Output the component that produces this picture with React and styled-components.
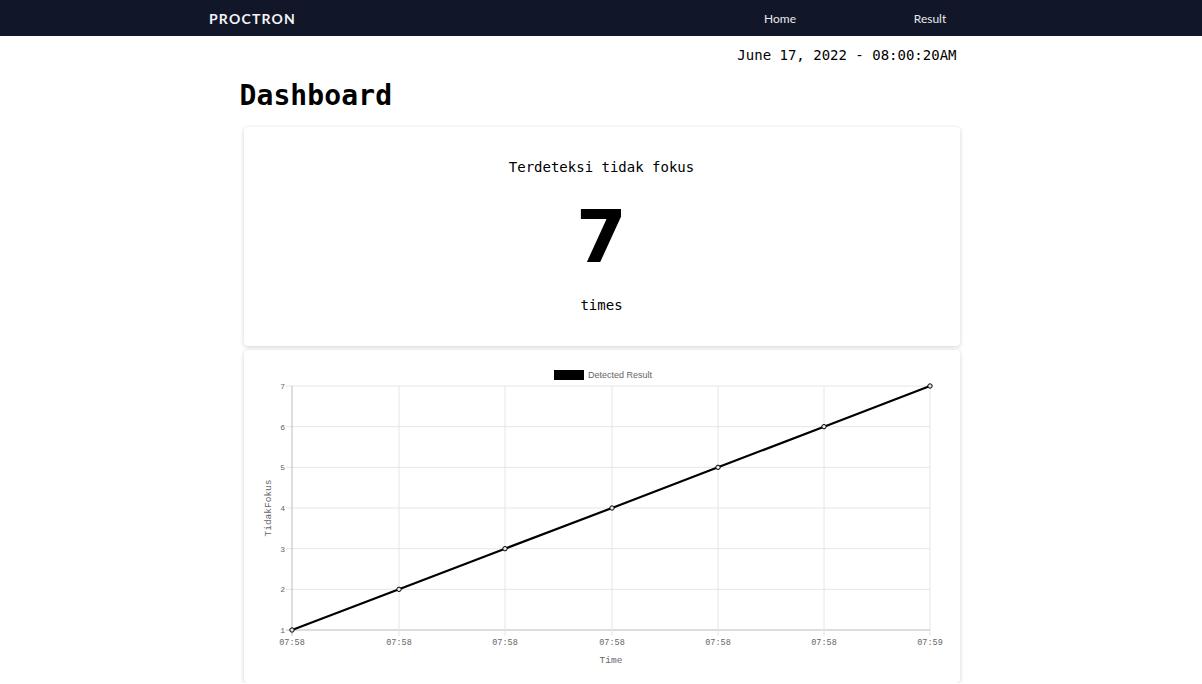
import React from "react";
import styled, { createGlobalStyle } from "styled-components";

const Global = createGlobalStyle`
  html, body { margin: 0; padding: 0; background: #fff; }
  body { font-family: "DejaVu Sans Mono", "Liberation Mono", monospace; color: #000; }
`;

const NavBar = styled.nav`
  height: 36px;
  background: #121629;
  display: flex;
  align-items: center;
  padding: 0 197px 0 209px;
`;
const Brand = styled.div`
  font-family: Lato, "Liberation Sans", sans-serif;
  font-weight: 700;
  font-size: 14px;
  letter-spacing: 1.2px;
  color: #f4f4f6;
  flex: 1;
`;
const NavLink = styled.a`
  font-family: Lato, "Liberation Sans", sans-serif;
  font-size: 12px;
  color: #e8e8ec;
  width: 150px;
  text-align: center;
  text-decoration: none;
`;

const Container = styled.main`
  width: 722px;
  margin: 0 auto;
  padding-left: 5px;
  display: flex;
  flex-direction: column;
`;
const DateLine = styled.div`
  text-align: right;
  font-size: 14px;
  padding-top: 10px;
  height: 27px;
  line-height: 18px;
  padding-right: 8px;
`;
const Title = styled.h1`
  margin: 5px 0 0 -3px;
  font-size: 28px;
  font-weight: 700;
  line-height: 36px;
  height: 35px;
  letter-spacing: 0.1px;
`;
const Card = styled.section`
  margin-left: 1px;
  width: 716px;
  background: #fff;
  border-radius: 4px;
  box-shadow: 0 1px 4px rgba(0,0,0,0.18);
  margin-top: 4px;
  display: flex;
  flex-direction: column;
  align-items: center;
  height: ${p => p.$h}px;
`;
const CardLabel = styled.div`
  font-size: 14px;
  line-height: 18px;
  margin-top: ${p => p.$mt}px;
`;
const BigNumber = styled.div`
  font-family: "DejaVu Sans", "Liberation Sans", sans-serif;
  font-weight: 700;
  font-size: 73px;
  line-height: 73px;
  margin-top: 24px;
`;

const xs = [48, 155, 261, 368, 474, 580, 686];
const yFor = v => 280 - (v - 1) * (244 / 6);

function Chart() {
  return (
    <svg width="716" height="333" viewBox="0 0 716 333">
      <rect x="310" y="20" width="30" height="10" fill="#000" />
      <text x="344" y="28" fontFamily="Liberation Sans, Arial, sans-serif" fontSize="9" fill="#666">Detected Result</text>
      {[1,2,3,4,5,6,7].map(v => (
        <g key={v}>
          <line x1="42" x2="686" y1={yFor(v)} y2={yFor(v)} stroke={v === 1 ? "#bbb" : "#e6e6e6"} strokeWidth="1" />
          <text x="41" y={yFor(v) + 3} textAnchor="end" fontFamily="Liberation Mono, Courier New, monospace" fontSize="8" fill="#666">{v}</text>
        </g>
      ))}
      {xs.map((x, i) => (
        <g key={x}>
          <line x1={x} x2={x} y1="36" y2="286" stroke={i === 0 ? "#bbb" : "#e6e6e6"} strokeWidth="1" />
          <text x={x} y="295" textAnchor="middle" fontFamily="Liberation Mono, Courier New, monospace" fontSize="8.5" fill="#666">{i === 6 ? "07:59" : "07:58"}</text>
        </g>
      ))}
      <text x="367" y="313" textAnchor="middle" fontFamily="Liberation Mono, Courier New, monospace" fontSize="9.5" fill="#666">Time</text>
      <text transform="translate(27 158) rotate(-90)" textAnchor="middle" fontFamily="Liberation Mono, Courier New, monospace" fontSize="9.5" fill="#666">TidakFokus</text>
      <polyline points={xs.map((x, i) => `${x},${yFor(i + 1)}`).join(" ")} fill="none" stroke="#000" strokeWidth="2.2" />
      {xs.map((x, i) => (
        <circle key={x} cx={x} cy={yFor(i + 1)} r="2.2" fill="#e6e6e6" stroke="#000" strokeWidth="1" />
      ))}
    </svg>
  );
}

export default function App() {
  return (
    <>
      <Global />
      <NavBar>
        <Brand>PROCTRON</Brand>
        <NavLink href="#">Home</NavLink>
        <NavLink href="#">Result</NavLink>
      </NavBar>
      <Container>
        <DateLine>June 17, 2022 - 08:00:20AM</DateLine>
        <Title>Dashboard</Title>
        <Card $h={219} style={{ marginTop: 14 }}>
          <CardLabel $mt={31}>Terdeteksi tidak fokus</CardLabel>
          <BigNumber>7</BigNumber>
          <CardLabel $mt={23}>times</CardLabel>
        </Card>
        <Card $h={333}>
          <Chart />
        </Card>
      </Container>
    </>
  );
}
